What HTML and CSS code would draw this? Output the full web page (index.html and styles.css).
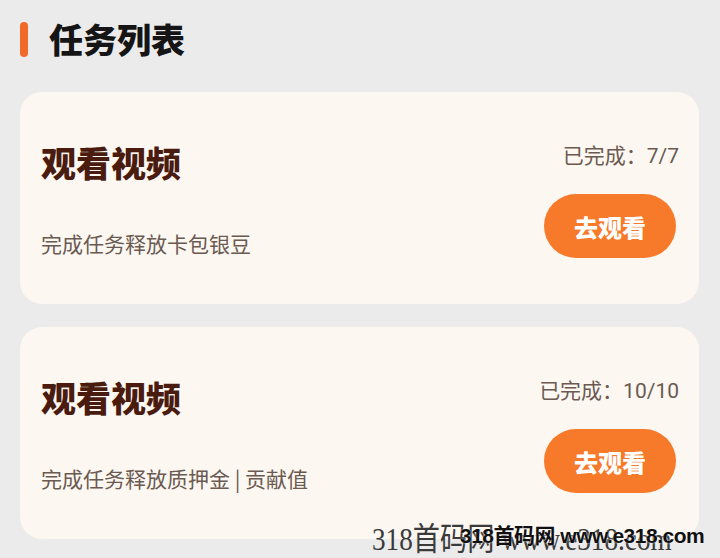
FILE: index.html
```html
<!DOCTYPE html>
<html lang="zh">
<head>
<meta charset="utf-8">
<link rel="stylesheet" href="styles.css">
</head>
<body>
<div class="page">
  <div class="section-head">
    <span class="bar"></span>
    <h1 class="section-title">任务列表</h1>
  </div>
  <div class="card">
    <div class="left">
      <div class="task-title">观看视频</div>
      <div class="task-desc">完成任务释放卡包银豆</div>
    </div>
    <div class="right">
      <div class="status">已完成：7/7</div>
      <button class="btn">去观看</button>
    </div>
  </div>
  <div class="card">
    <div class="left">
      <div class="task-title">观看视频</div>
      <div class="task-desc">完成任务释放质押金 | 贡献值</div>
    </div>
    <div class="right">
      <div class="status">已完成：10/10</div>
      <button class="btn">去观看</button>
    </div>
  </div>
</div>
<div class="wm wm-serif">318首码网 www.e318.com</div>
<div class="wm wm-bold">318首码网 www.e318.com</div>
</body>
</html>
```
FILE: styles.css
```css
html, body {
  margin: 0;
  padding: 0;
  background: #ebebeb;
  font-family: "Noto Sans CJK SC", "Noto Sans", sans-serif;
  width: 720px;
  height: 558px;
  overflow: hidden;
  position: relative;
}
.page {
  padding: 19px 21px 0 20px;
  display: flex;
  flex-direction: column;
}
.section-head {
  display: flex;
  align-items: center;
  height: 40px;
  margin-bottom: 33px;
}
.bar {
  width: 8px;
  height: 35px;
  border-radius: 4px;
  background: #f26a2b;
  margin-right: 21px;
}
.section-title {
  margin: 0;
  font-size: 34px;
  font-weight: 900;
  color: #151515;
  line-height: 40px;
}
.card {
  background: #fdf7f2;
  border-radius: 22px;
  height: 212px;
  box-sizing: border-box;
  padding: 50px 23px 46px 21px;
  display: flex;
  justify-content: space-between;
  margin-bottom: 23px;
}
.left {
  display: flex;
  flex-direction: column;
  justify-content: space-between;
}
.task-title {
  font-size: 35px;
  font-weight: 900;
  color: #4a1b0f;
  line-height: 40px;
}
.task-desc {
  font-size: 21px;
  color: #6a5a51;
  line-height: 30px;
}
.right {
  display: flex;
  flex-direction: column;
  align-items: flex-end;
}
.status {
  font-family: Roboto, "Noto Sans CJK SC", sans-serif;
  font-size: 21px;
  color: #6a5a51;
  line-height: 28px;
  margin-bottom: 24px;
  margin-right: -3px;
}
.btn {
  width: 132px;
  height: 64px;
  border: none;
  border-radius: 32px;
  background: #f7792a;
  color: #ffffff;
  font-family: "Noto Sans CJK SC", "Noto Sans", sans-serif;
  font-size: 24px;
  font-weight: 900;
  padding: 0;
}
.wm {
  position: absolute;
  white-space: nowrap;
}
.wm-serif {
  left: 372px;
  top: 520px;
  font-family: "Liberation Serif", "Noto Sans CJK SC", serif;
  font-size: 32px;
  color: #3a3a3a;
  transform: scaleX(0.85);
  transform-origin: left top;
  line-height: 38px;
}
.wm-bold {
  left: 460px;
  top: 522px;
  font-family: "Liberation Sans", "Noto Sans CJK SC", sans-serif;
  font-size: 21px;
  font-weight: 700;
  color: #111111;
  letter-spacing: -0.5px;
  line-height: 28px;
  text-shadow: 0 0 2px #ffffff;
}
```
